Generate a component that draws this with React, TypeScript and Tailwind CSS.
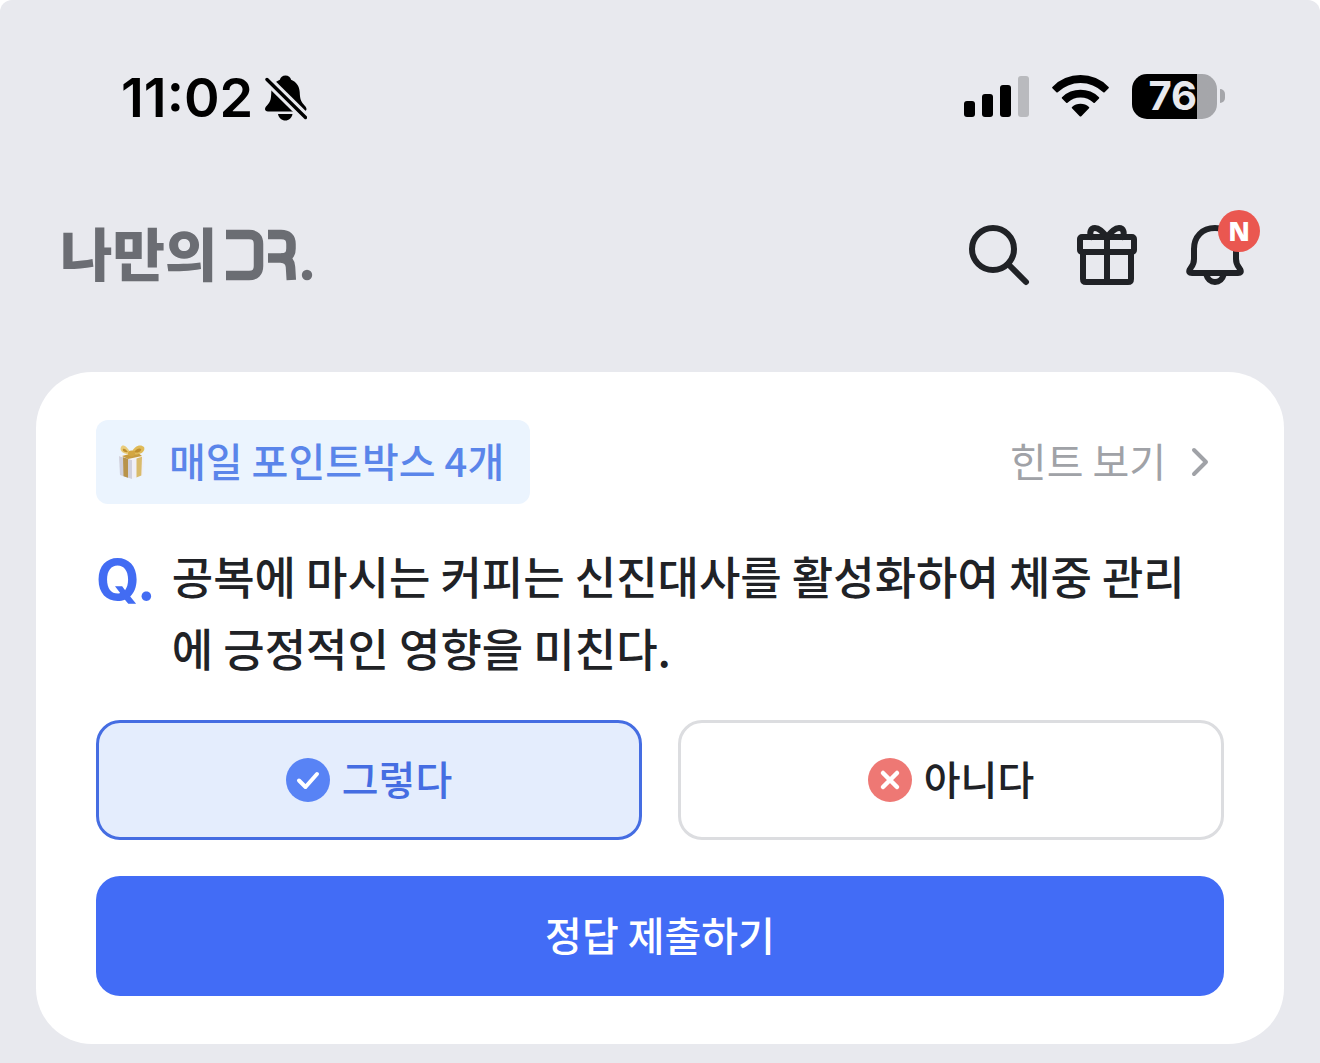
import React, { useState } from 'react';

const options = [
  { id: 'yes', label: '그렇다' },
  { id: 'no', label: '아니다' },
];

function StatusBar() {
  return (
    <div className="flex h-[196px] items-center justify-between pl-[121px] pr-[95px] text-black">
      <div className="flex items-center gap-3">
        <span className="font-['Inter',sans-serif] text-[54px] font-semibold leading-none">11:02</span>
        <svg className="h-[46px] w-[42px]" viewBox="0 0 42 46" aria-label="무음">
          <mask id="slash">
            <rect width="42" height="46" fill="#fff" />
            <path d="M-1 1.500 44 46" stroke="#000" strokeWidth="9.500" />
          </mask>
          <g mask="url(#slash)">
            <path d="M20.500.500c3 0 5 1.800 5.600 4.200 5.600 2.200 8.300 6.800 8.600 12.300.3 6.500 1 9 4 12.500 1.500 1.700 2.800 3 2.800 4.500 0 1.600-1.200 2.400-3 2.400H3c-1.800 0-3-.8-3-2.400 0-1.500 1.300-2.800 2.800-4.500 3-3.500 3.200-6 3.500-12.500.3-5.500 3-10.100 8.600-12.300C15.500 2.300 17.500.500 20.500.500Z" />
            <path d="M13 39h14.500c-.8 4-3.600 6.500-7.200 6.500S13.800 43 13 39Z" />
          </g>
          <path d="M2 4.500 40.500 42.500" stroke="#000" strokeWidth="3.400" strokeLinecap="round" />
        </svg>
      </div>
      <div className="flex items-center gap-[23px] pb-1">
        <svg className="h-[42px] w-[65px]" viewBox="0 0 65 42" aria-label="신호">
          <rect x="0" y="26" width="11" height="16" rx="3" />
          <rect x="18" y="19" width="11" height="23" rx="3" />
          <rect x="36" y="10" width="11" height="32" rx="3" />
          <rect x="54" y="1" width="11" height="41" rx="3" fill="#b9babe" />
        </svg>
        <svg className="h-[42px] w-[57px]" viewBox="0 0 57 42" aria-label="와이파이">
          <path d="M.4 12.900a39.200 39.200 0 0 1 56.200 0q.6.700 0 1.300l-4 4q-.7.600-1.300 0a33 33 0 0 0-45.600 0q-.6.600-1.300 0l-4-4q-.6-.6 0-1.300Z" transform="translate(0 -1)" />
          <path d="M10 22.200a26.400 26.400 0 0 1 37 0q.6.700 0 1.300l-4.200 4.200q-.7.600-1.300 0a19 19 0 0 0-26 0q-.6.600-1.300 0L10 23.500q-.6-.6 0-1.300Z" />
          <path d="M20 32a13 13 0 0 1 17 0q.6.700 0 1.300l-7.700 7.900q-.8.800-1.600 0L20 33.300q-.6-.6 0-1.300Z" />
        </svg>
        <div className="flex items-center gap-[3px]">
          <div className="flex h-[45px] w-[85px] items-center justify-end rounded-[15px] bg-linear-to-r from-black from-[65px] to-[#a5a6aa] to-[65px] pr-5">
            <span className="font-['Inter',sans-serif] text-[40px] font-bold leading-none text-[#e8e9ee]">76</span>
          </div>
          <div className="h-[14px] w-[5px] rounded-r-full bg-[#a5a6aa]" />
        </div>
      </div>
    </div>
  );
}

function Logo() {
  return (
    <a href="#" className="flex items-center gap-2 text-[#6b6d73]">
      <span className="pb-2 text-[57px] font-black leading-none">나만의</span>
      <svg className="h-[52px] w-[88px]" viewBox="0 0 88 52" fill="none" stroke="currentColor" strokeWidth="9.500" aria-label="DR">
        <path d="M1 5.500H24Q33.500 5.500 33.500 15V37Q33.500 46.500 24 46.500H1" />
        <path d="M43 5.500H56Q66 5.500 66 15V19.500Q66 29 56 29H43" />
        <path d="M56 29Q65 29.500 65.500 38L66.300 51" />
        <circle cx="82" cy="46" r="5.200" fill="currentColor" stroke="none" />
      </svg>
    </a>
  );
}

function Header() {
  return (
    <header className="flex h-[118px] items-center justify-between pl-[60px] pr-[69px]">
      <Logo />
      <nav className="flex items-center gap-9 text-[#202226]">
        <button aria-label="검색">
          <svg className="size-[72px]" viewBox="0 0 72 72" fill="none" stroke="currentColor" strokeWidth="6" strokeLinecap="round">
            <circle cx="30" cy="30" r="21" />
            <path d="M45 45 63 63" />
          </svg>
        </button>
        <button aria-label="선물">
          <svg className="size-[72px]" viewBox="0 0 72 72" fill="none" stroke="currentColor" strokeWidth="6" strokeLinecap="round" strokeLinejoin="round">
            <rect x="9" y="18" width="54" height="15" rx="2" />
            <path d="M12 33V60Q12 63 15 63H57Q60 63 60 60V33" />
            <path d="M36 18V63" />
            <path d="M36 18C31 12 28 9 24 9C19.500 9 18 14 20.500 18" />
            <path d="M36 18C41 12 44 9 48 9C52.500 9 54 14 51.500 18" />
          </svg>
        </button>
        <button aria-label="알림" className="relative">
          <svg className="size-[72px]" viewBox="0 0 72 72" fill="none" stroke="currentColor" strokeWidth="6" strokeLinejoin="round">
            <path d="M36 9C23 9 15 18 15 30V40C15 44 14 46 12 48.500L10.800 50.500C9.500 53 10.500 54 13 54H59C61.500 54 62.500 53 61.200 50.500L60 48.500C58 46 57 44 57 40V30C57 18 49 9 36 9Z" />
            <path d="M27 55C28.500 60 32 63 36 63S43.500 60 45 55" />
          </svg>
          <span className="absolute -top-[9px] right-[-9px] flex size-[42px] items-center justify-center rounded-full bg-[#ea5750] font-['Open_Sans',sans-serif] text-[26px] font-extrabold leading-none text-white">
            N
          </span>
        </button>
      </nav>
    </header>
  );
}

function GiftBox() {
  return (
    <svg className="h-[36px] w-[28px]" viewBox="0 0 28 36" aria-hidden="true">
      <path d="M2 12 15 16V35L3 31Z" fill="#d0d0dc" />
      <path d="M15 16 27 12 26 31 15 35Z" fill="#efeff7" />
      <path d="M2 12 14 8.500 27 12 15 16Z" fill="#f5f3f2" />
      <path d="M6 13.200 11 14.800V33.700L6.500 32.200Z" fill="#b8934a" />
      <path d="M19.500 14.500 25 12.700 24.300 31.600 19.500 33.500Z" fill="#d9bb6b" />
      <path d="M5 12 20 8 25 12 11 15Z" fill="#c79c3f" />
      <path d="M14 10C10 1 5 0 4 3C2 7 7 11 14 10Z" fill="#e9cc7b" />
      <path d="M14 10C17 1 24 0 27 3C29 8 22 12 14 10Z" fill="#dfba58" />
      <path d="M11 8C9 5 7 4 6 5S7 9 11 8ZM17 8C20 4 23 4 24 5S22 10 17 8Z" fill="#c08f2d" />
      <ellipse cx="14.500" cy="9.500" rx="3.500" ry="3" fill="#d3a640" />
    </svg>
  );
}

function CheckMark() {
  return (
    <svg className="size-11" viewBox="0 0 44 44" fill="none" stroke="#fff" strokeWidth="4" strokeLinecap="round" strokeLinejoin="round" aria-hidden="true">
      <circle cx="22" cy="22" r="22" fill="#5883f5" stroke="none" />
      <path d="M13 22.500 19.500 29 31 16" />
    </svg>
  );
}

function CrossMark() {
  return (
    <svg className="size-11" viewBox="0 0 44 44" fill="none" stroke="#fff" strokeWidth="4.500" strokeLinecap="round" aria-hidden="true">
      <circle cx="22" cy="22" r="22" fill="#ee7874" stroke="none" />
      <path d="M15 15 29 29M29 15 15 29" />
    </svg>
  );
}

function QuizCard() {
  const [answer, setAnswer] = useState('yes');

  return (
    <section className="mx-9 mt-[58px] flex flex-col gap-9 rounded-[56px] bg-white px-[60px] py-12">
      <div className="flex items-center justify-between">
        <div className="flex h-[84px] items-center gap-6 rounded-xl bg-[#ebf4fe] pl-[21px] pr-[26px] text-[40px] font-medium text-[#5a85ea]">
          <GiftBox />
          <span className="pb-1">매일 포인트박스 4개</span>
        </div>
        <a href="#" className="flex items-center gap-6 pr-3.5 text-[40px] text-[#a0a2a7]">
          <span className="pb-1">힌트 보기</span>
          <svg className="h-[32px] w-[20px]" viewBox="0 0 20 32" fill="none" stroke="currentColor" strokeWidth="4" strokeLinecap="round" strokeLinejoin="round" aria-hidden="true">
            <path d="M4 4 16 16 4 28" />
          </svg>
        </a>
      </div>

      <div className="flex gap-4">
        <span className="font-['Inter',sans-serif] text-[56px] font-bold leading-[80px] text-[#426cf3]">Q.</span>
        <h1 className="text-[45px] font-medium leading-[72px] text-[#202226]">
          공복에 마시는 커피는 신진대사를 활성화하여 체중 관리에 긍정적인 영향을 미친다.
        </h1>
      </div>

      <div className="grid grid-cols-2 gap-9">
        {options.map((option) => (
          <button
            key={option.id}
            aria-pressed={answer === option.id}
            onClick={() => setAnswer(option.id)}
            className={
              answer === option.id
                ? 'flex h-[120px] items-center justify-center gap-3 rounded-3xl border-3 border-[#456de2] bg-[#e4edfd] text-[40px] font-medium text-[#456de2]'
                : 'flex h-[120px] items-center justify-center gap-3 rounded-3xl border-3 border-[#dcdde0] bg-white text-[40px] font-medium text-[#202226]'
            }
          >
            {option.id === 'yes' ? <CheckMark /> : <CrossMark />}
            <span className="pb-1">{option.label}</span>
          </button>
        ))}
      </div>

      <button className="h-[120px] rounded-3xl bg-[#426cf6] pb-1 text-[40px] font-medium text-white">
        정답 제출하기
      </button>
    </section>
  );
}

export default function App() {
  return (
    <div className="min-h-screen bg-white font-['Noto_Sans_CJK_KR',sans-serif]">
      <main className="min-h-screen rounded-t-xl bg-[#e8e9ee]">
        <StatusBar />
        <Header />
        <QuizCard />
      </main>
    </div>
  );
}
